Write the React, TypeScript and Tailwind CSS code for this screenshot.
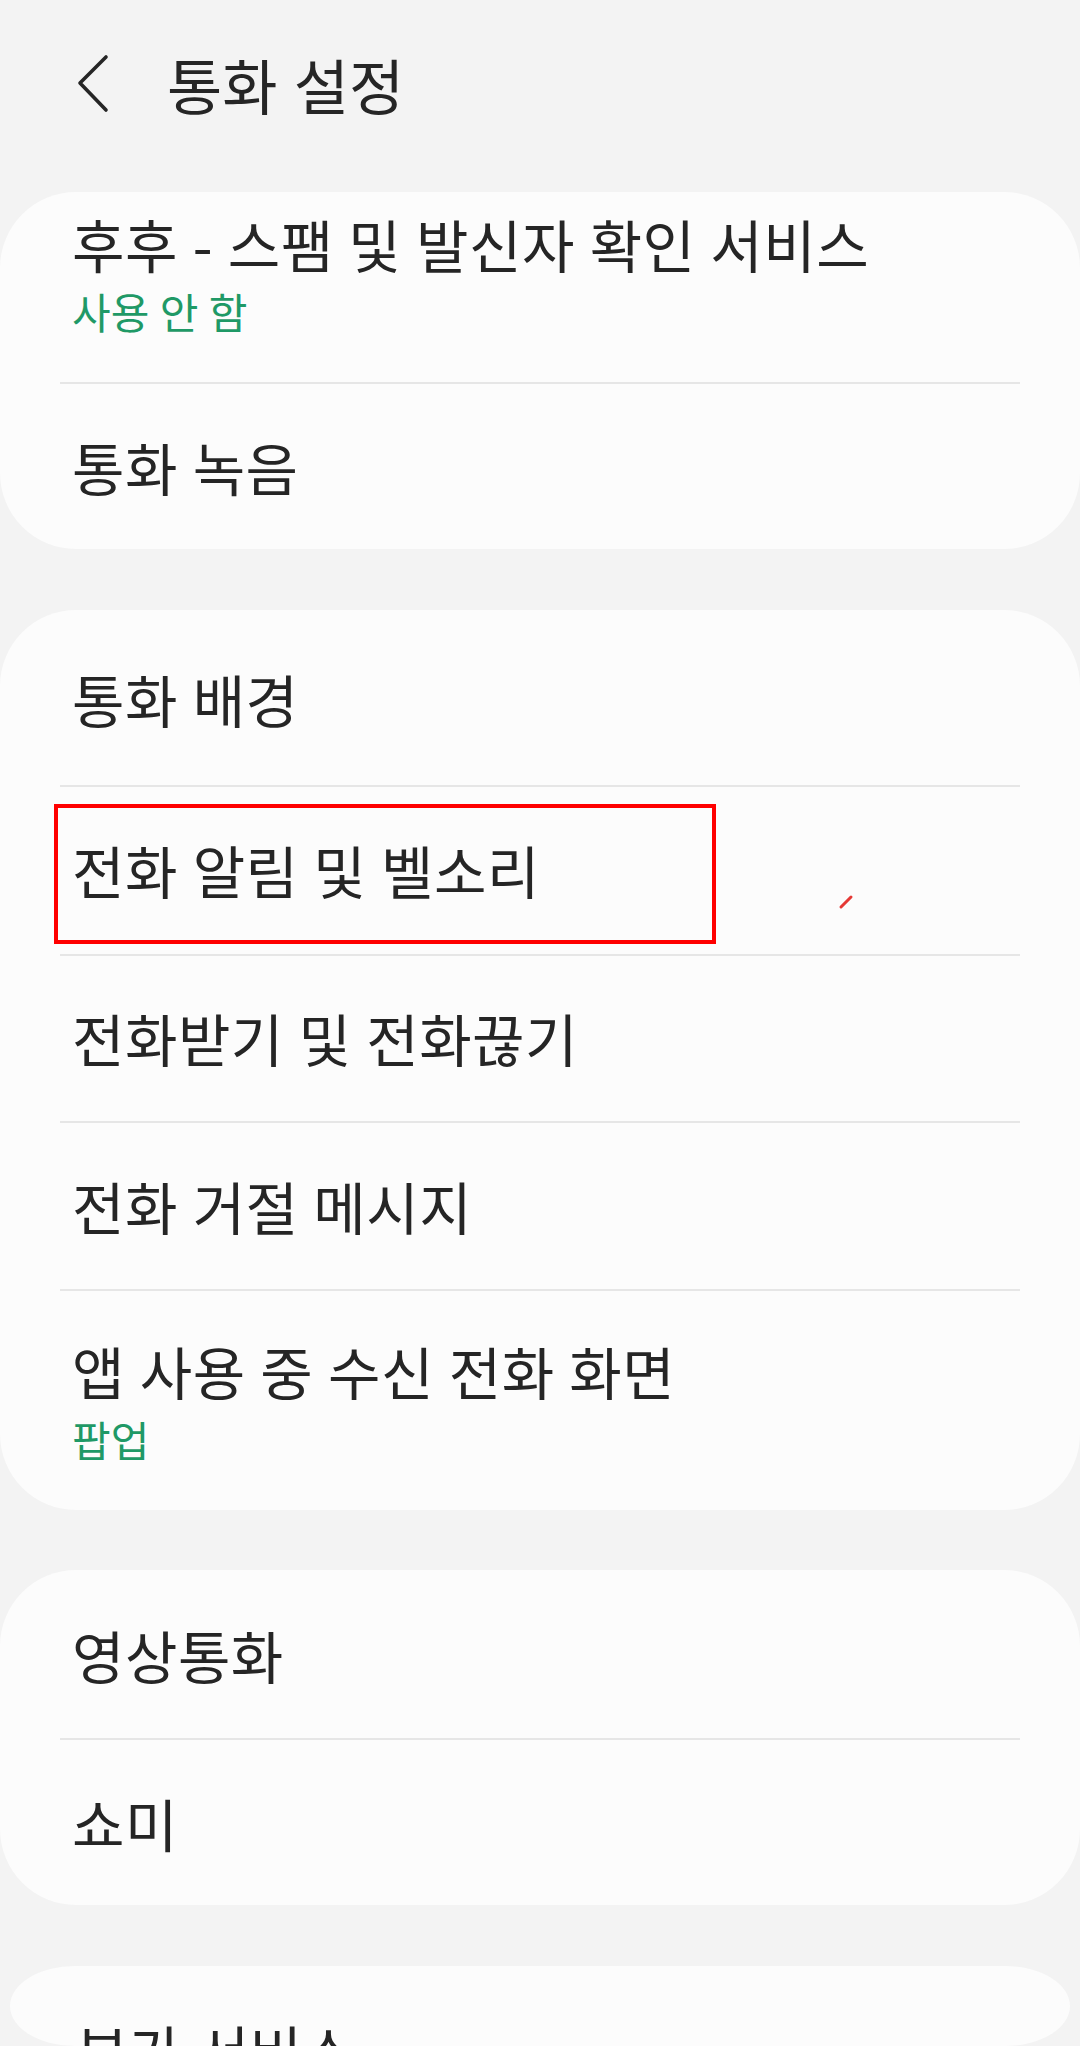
import React from "react";

const FONT = "font-['Noto_Sans_CJK_KR','Noto_Sans',sans-serif]";

type RowProps = {
  title: string;
  sub?: string;
  h: number;
  pt: number;
  gap?: number;
};

function Row({ title, sub, h, pt, gap = 12 }: RowProps) {
  return (
    <div className="pl-[72px] pr-[60px]" style={{ height: h, paddingTop: pt }}>
      <div className="text-[57px] leading-[64px] tracking-[0.5px] [word-spacing:1.5px] text-[#252525] whitespace-nowrap">
        {title}
      </div>
      {sub && (
        <div
          className="text-[42px] leading-[48px] [word-spacing:1px] text-[#1f9966] whitespace-nowrap"
          style={{ marginTop: gap }}
        >
          {sub}
        </div>
      )}
    </div>
  );
}

function Divider() {
  return <div className="mx-[60px] h-[2px] bg-[#e6e6e6]" />;
}

export default function App() {
  return (
    <div className={`${FONT} w-[1080px] h-[2046px] overflow-hidden bg-[#f3f3f3]`}>
      {/* header */}
      <div className="h-[192px] flex items-start pl-[72px] pt-[51px]">
        <svg width="40" height="64" viewBox="0 0 40 64" className="shrink-0">
          <polyline
            points="34,6 8,32 34,59"
            fill="none"
            stroke="#252525"
            strokeWidth="3.6"
            strokeLinecap="round"
            strokeLinejoin="round"
          />
        </svg>
        <div className="ml-[55px] -mt-[2px] text-[60px] leading-[70px] [word-spacing:3px] text-[#252525] whitespace-nowrap">
          통화 설정
        </div>
      </div>

      {/* card 1 */}
      <div className="bg-[#fcfcfc] rounded-[76px]">
        <Row title="후후 - 스팸 및 발신자 확인 서비스" sub="사용 안 함" h={190} pt={19} />
        <Divider />
        <Row title="통화 녹음" h={165} pt={50} />
      </div>

      {/* card 2 */}
      <div className="relative mt-[61px] bg-[#fcfcfc] rounded-[76px]">
        <Row title="통화 배경" h={175} pt={56} />
        <Divider />
        <Row title="전화 알림 및 벨소리" h={167} pt={50} />
        <Divider />
        <Row title="전화받기 및 전화끊기" h={165} pt={49} />
        <Divider />
        <Row title="전화 거절 메시지" h={166} pt={50} />
        <Divider />
        <Row title="앱 사용 중 수신 전화 화면" sub="팝업" h={219} pt={47} gap={13} />

        {/* annotation box */}
        <div className="absolute left-[54px] top-[194px] w-[662px] h-[140px] border-[4px] border-[#ff0000]" />
        <svg className="absolute left-[836px] top-[282px]" width="20" height="20" viewBox="0 0 20 20">
          <line x1="5" y1="15" x2="15" y2="5" stroke="#e53935" strokeWidth="3" strokeLinecap="round" />
        </svg>
      </div>

      {/* card 3 */}
      <div className="mt-[60px] bg-[#fcfcfc] rounded-[76px]">
        <Row title="영상통화" h={168} pt={52} />
        <Divider />
        <Row title="쇼미" h={165} pt={50} />
      </div>

      {/* card 4 (partially visible) */}
      <div className="mt-[61px] mx-[10px] h-[80px] overflow-hidden bg-[#fcfcfc] rounded-[65px/40px] pl-[66px] pt-[51px]">
        <div className="text-[57px] leading-[64px] tracking-[0.5px] [word-spacing:1.5px] text-[#252525] whitespace-nowrap">
          부가 서비스
        </div>
      </div>
    </div>
  );
}
